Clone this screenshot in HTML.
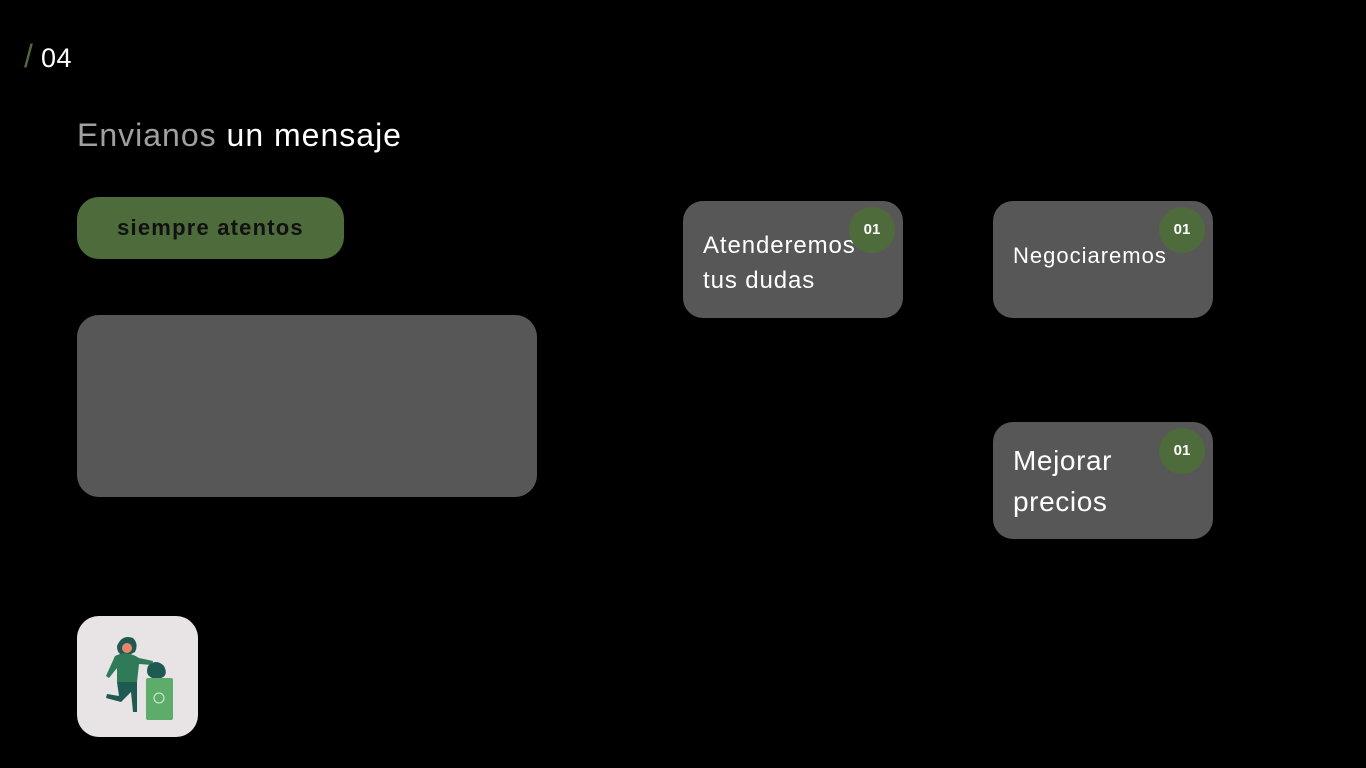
<!DOCTYPE html>
<html><head><meta charset="utf-8"><style>
body{margin:0;width:1366px;height:768px;background:#000;font-family:"Liberation Sans",sans-serif;position:relative;overflow:hidden}
.a{position:absolute}
.card{position:absolute;width:220px;height:117px;background:#575757;border-radius:20px;color:#fff}
.num{position:absolute;width:46px;height:46px;border-radius:50%;background:#4e6b3c;color:#fff;font-weight:bold;font-size:15px;text-align:center;line-height:46px;left:166px;top:6px}
</style></head><body>
<div class="a" style="left:24px;top:43px;font-size:27px;color:#fff;letter-spacing:0.5px"><span style="color:#4e6b3c;font-size:32px;display:inline-block;width:17px;line-height:27px">/</span>04</div>
<div class="a" style="left:77px;top:117px;font-size:32px;color:#fff;letter-spacing:1px"><span style="color:#a0a0a0">Envianos</span> un mensaje</div>
<div class="a" style="left:77px;top:197px;width:267px;height:62px;border-radius:22px;background:#4e6b3c;color:#111;font-weight:bold;font-size:22px;text-align:center;line-height:62px;letter-spacing:1.2px">siempre atentos</div>
<div class="a" style="left:77px;top:315px;width:460px;height:182px;border-radius:22px;background:#575757"></div>
<div class="card" style="left:683px;top:201px"><div class="a" style="left:20px;top:27px;font-size:24px;line-height:35px;letter-spacing:0.9px">Atenderemos<br>tus dudas</div><div class="num">01</div></div>
<div class="card" style="left:993px;top:201px"><div class="a" style="left:20px;top:42px;font-size:22px;letter-spacing:1px">Negociaremos</div><div class="num">01</div></div>
<div class="card" style="left:993px;top:422px"><div class="a" style="left:20px;top:18px;font-size:28px;line-height:41px;letter-spacing:0.6px">Mejorar<br>precios</div><div class="num">01</div></div>
<div class="a" style="left:77px;top:616px;width:121px;height:121px;border-radius:22px;background:#e8e3e5;overflow:hidden">
<svg width="121" height="121" viewBox="0 0 121 121">
<path d="M40 30 q5 -12 16 -8 q6 6 2 14 l-8 4 q-10 0 -10 -10z" fill="#1f5a52"/>
<circle cx="50" cy="32" r="5" fill="#e9866a"/>
<path d="M38 40 q12 -6 24 2 l14 3 l-1 4 l-13 -1 l-2 18 l-20 0 l0 -14 l-8 10 l-3 -2z" fill="#2f7a57"/>
<path d="M40 66 l20 0 l0 30 l-4 0 l-2 -20 l-10 10 l-15 -4 l1 -4 l12 2z" fill="#1f5a52"/>
<path d="M71 50 q8 -8 16 0 q6 12 -8 13 q-12 -2 -8 -13z" fill="#1f5a52"/>
<rect x="69" y="62" width="27" height="42" rx="2" fill="#5dac6a"/>
<circle cx="82" cy="82" r="5" fill="none" stroke="#d7efd9" stroke-width="1"/>
</svg></div>
</body></html>
